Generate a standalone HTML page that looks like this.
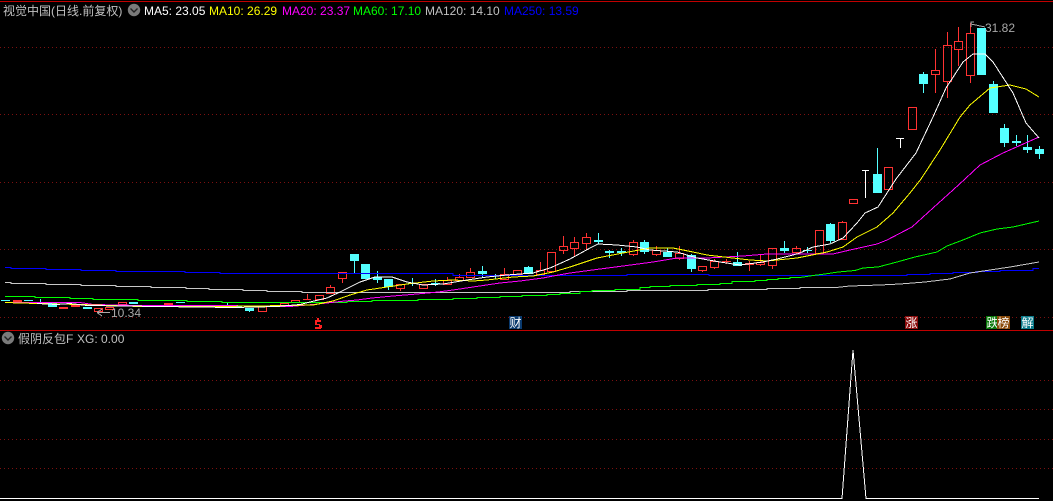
<!DOCTYPE html>
<html><head><meta charset="utf-8"><style>
html,body{margin:0;padding:0;background:#000;width:1053px;height:501px;overflow:hidden}
svg{position:absolute;left:0;top:0}
.t{position:absolute;font:12px/14px "Liberation Sans","WenQuanYi Zen Hei","Noto Sans CJK SC",sans-serif;white-space:pre;color:#c0c0c0}
.m{position:absolute;width:13px;height:13px;font:12px/13px "WenQuanYi Zen Hei","Noto Sans CJK SC",sans-serif;color:#fff;text-align:center;top:316px}
</style></head><body>
<svg width="1053" height="501" viewBox="0 0 1053 501" shape-rendering="crispEdges" fill="none">
<path d="M0 1.5H1053M0 330.5H1053" stroke="#c00000"/>
<path d="M0 47.5H1053M0 114.5H1053M0 182.5H1053M0 249.5H1053M0 317.5H1053M0 380.5H1053M0 409.5H1053M0 439.5H1053M0 468.5H1053" stroke="#7c1010" stroke-dasharray="1 3"/>
<!-- cyan candles -->
<path fill="#54ffff" d="M1035 149h9v5h-9zM1023 147h9v3h-9zM1012 141h9v2h-9zM1000 128h9v15h-9zM989 84h9v29h-9zM977 28h9v47h-9zM919 74h9v10h-9zM873 174h9v19h-9zM826 224h9v17h-9zM803 250h9v1h-9zM780 248h9v3h-9zM733 262h9v4h-9zM687 255h9v14h-9zM663 252h9v5h-9zM640 242h9v10h-9zM617 251h9v2h-9zM605 251h9v2h-9zM594 240h9v2h-9zM524 267h9v7h-9zM478 271h9v3h-9zM431 283h9v1h-9zM408 283h9v1h-9zM384 279h9v8h-9zM373 277h9v3h-9zM361 264h9v15h-9zM350 254h9v7h-9zM245 308h9v3h-9zM233 306h9v2h-9zM188 306h9v1h-9zM176 302h9v1h-9zM129 302h9v2h-9zM83 307h9v2h-9zM48 303h9v4h-9zM24 300h9v1h-9zM1 300h9v1h-9z"/>
<path stroke="#54ffff" d="M1039.5 146V159M1027.5 135V153M1016.5 135V146M1004.5 124V147M993.5 81V84M923.5 72V93M877.5 148V174M830.5 223V243M807.5 247V253M784.5 241V253M737.5 252V266M691.5 254V272M667.5 248V252M644.5 240V254M621.5 248V256M609.5 250V258M598.5 233V244M528.5 266V267M495.5 274V279M482.5 266V277M435.5 279V286M412.5 278V286M388.5 287V290M377.5 271V283M354.5 261V273M227.5 303V306M249.5 311V312M40.5 299V304"/>
<!-- red candles -->
<path fill="#ff3232" d="M13 300h9v2h-9zM59 307h9v2h-9zM71 305h9v2h-9zM164 303h9v3h-9zM198 306h9v1h-9zM722 261h9v1h-9z"/>
<path stroke="#ff3232" d="M966.5 33.5h8v42h-8zM970.5 23V33M970.5 76V83M954.5 41.5h8v8h-8zM958.5 27V41M958.5 50V66M943.5 45.5h8v36h-8zM947.5 32V45M947.5 82V98M931.5 70.5h8v4h-8zM935.5 49V70M935.5 75V93M908.5 107.5h8v22h-8zM884.5 167.5h8v22h-8zM849.5 199.5h8v4h-8zM838.5 222.5h8v17h-8zM842.5 221V222M815.5 230.5h8v23h-8zM792.5 248.5h8v4h-8zM796.5 246V248M796.5 253V254M768.5 248.5h8v17h-8zM772.5 266V269M756.5 262.5h8v2h-8zM760.5 254V262M760.5 265V266M745.5 263.5h8v1h-8zM749.5 261V263M749.5 265V271M726.5 259V264M710.5 261.5h8v6h-8zM714.5 259V261M714.5 268V269M698.5 266.5h8v4h-8zM702.5 271V272M675.5 253.5h8v5h-8zM679.5 246V253M679.5 259V260M652.5 250.5h8v4h-8zM656.5 246V250M656.5 255V256M629.5 242.5h8v12h-8zM633.5 240V242M633.5 255V256M582.5 237.5h8v6h-8zM586.5 233V237M586.5 244V250M570.5 242.5h8v6h-8zM574.5 237V242M574.5 249V257M559.5 246.5h8v4h-8zM563.5 236V246M563.5 251V254M547.5 252.5h8v19h-8zM536.5 270.5h8v4h-8zM540.5 262V270M513.5 270.5h8v4h-8zM500.5 274.5h8v5h-8zM504.5 268V274M466.5 272.5h8v5h-8zM470.5 268V272M455.5 277.5h8v3h-8zM459.5 274V277M443.5 280.5h8v4h-8zM447.5 277V280M419.5 284.5h8v4h-8zM396.5 284.5h8v4h-8zM400.5 289V291M338.5 272.5h8v6h-8zM342.5 279V283M326.5 287.5h8v6h-8zM330.5 285V287M315.5 295.5h8v4h-8zM303 299.5h8M307.5 294V299M291.5 300.5h8v2h-8zM280.5 303.5h8v2h-8zM258.5 306.5h8v5h-8zM118.5 302.5h8v2h-8zM105.5 307.5h8v2h-8zM94.5 308.5h8v3h-8z"/>
<!-- MA lines -->
<g stroke-width="1">
<path stroke="#0000ff" d="M5 267.5H11V268.5H46V269.5H81V270.5H116V271.5H185V272.5H220V273.5H453V275.5H627V274.5H709V275.5H907V274.5H930V273.5H953V272.5H977V271.5H1000V270.5H1033V268.5H1039"/>
<path stroke="#c8c8c8" d="M5 282.5H11V283.5H46V284.5H81V285.5H116V286.5H151V287.5H186V288.5H209V289.5H243V290.5H267V291.5H302V292.5H570V291.5H627V290.5H708V289.5H767V288.5H800V287.5H836L850 286 880 285 900 284 925 282 950 279 970 273 990 270 1010 267 1039 262"/>
<path stroke="#00ff00" d="M5 296.5H35V297.5H70V298.5H93V299.5H138V300.5H187V301.5H222V302.5H347V301.5H372V300.5H418V299.5H453V298.5H477V297.5H500V296.5H522V295.5H547V294.5H560V293.5H580V291.5H592V290.5H615V289.5H640V287.5H650V286.5H670V285.5H697V284.5H720V283.5H732V281.5H755V280.5H767V279.5H778V278.5H790V277.5H800L813 275.5 825 274 838 272 855 270.5 863 268 878 267 897 262 915 257 937 252 947 246 963 240 980 233 997 229 1013 227 1039 221"/>
<path stroke="#ff00ff" d="M5 302.5 80 302.5 93 304.5 140 305.5 220 305.5 290 306.5 313 304.5 327 303 345 301 357 300 372 298 393 296 417 294 428 293 438 292 453 290 473 287 500 283 520 281 543 278 553 276 570 273 600 269 623 266 653 262 677 258 707 258 743 256 767 254 820 254 833 254 850 250 877 244 887 240 912 227 933 208 953 190 965 179 980 165 1003 153 1039 137"/>
<path stroke="#ffff00" d="M5 302.5 37 303.5 80 304.5 140 306.5 220 306.5 287 305.5 313 305 333 301 350 295 367 290 387 287 407 284 433 281 453 280 473 281 487 280 513 277 533 276 553 272 570 267 597 258 623 253 650 248 673 248 693 252 707 255 750 260 767 261 797 258 827 252 843 247 857 237 877 227 893 213 910 193 921 179 940 150 960 117 970 105 990 88 1010 85 1026 89 1039 97"/>
<path stroke="#ffffff" d="M37 303.5 57 304.5 70 303.5 87 305.5 233 307.5 277 306.5 300 304.5 310 302 327 298 340 292 360 282 375 277 392 277 407 282 423 285 443 284 467 280 487 277 507 275 533 273 550 268 570 259 590 248 598 244 617 245 637 247 650 250 677 252 697 258 720 262 740 265 763 262 777 259 793 255 800 253 813 247 830 244 843 238 857 223 865 213 878 207 896 179 916 153 933 117 946 88 963 62 973 54 985 54 993 62 1013 93 1026 123 1039 138"/>
</g>
<path stroke="#ffffff" d="M862 170.5H869M865.5 171V198M896 138.5H904M900.5 139V148"/>
<!-- XG -->
<path stroke="#ffffff" d="M0 498.5H842L853 350 866 498.5H1039"/>
<path stroke="#a8a8a8" d="M971 27V22H974M971 24L985 27M97 312.5H110M97 312.5L102 309M97 312.5L102 316"/>
<!-- $ marker -->
<path fill="#ff2020" d="M317 318h2v2h-2zM315 320h6v2h-6zM315 322h2v3h-2zM317 324h3v1h-3zM319 325h3v3h-3zM315 327h6v2h-6z"/>
<!-- icons -->
<circle cx="134" cy="10" r="6.2" fill="#7a7a7a" shape-rendering="auto"/>
<path d="M130.5 8.5L134 12 137.5 8.5" stroke="#222" stroke-width="1.4" shape-rendering="auto"/>
<circle cx="8" cy="338" r="6.2" fill="#7a7a7a" shape-rendering="auto"/>
<path d="M4.5 336.5L8 340 11.5 336.5" stroke="#222" stroke-width="1.4" shape-rendering="auto"/>
</svg>
<div class="t" style="left:3px;top:4px">视觉中国(日线.前复权)</div>
<div class="t" style="left:144px;top:4px;color:#fff">MA5: 23.05</div>
<div class="t" style="left:209px;top:4px;color:#ff0">MA10: 26.29</div>
<div class="t" style="left:282px;top:4px;color:#f0f">MA20: 23.37</div>
<div class="t" style="left:353px;top:4px;color:#0f0">MA60: 17.10</div>
<div class="t" style="left:425px;top:4px;color:#c0c0c0">MA120: 14.10</div>
<div class="t" style="left:504px;top:4px;color:#0000ff">MA250: 13.59</div>
<div class="t" style="left:985px;top:21px;color:#a8a8a8">31.82</div>
<div class="t" style="left:111px;top:306px;color:#a8a8a8">10.34</div>
<div class="t" style="left:18px;top:332px">假阴反包F</div>
<div class="t" style="left:77px;top:332px">XG: 0.00</div>
<div class="m" style="left:509px;background:#0a3a6e">财</div>
<div class="m" style="left:905px;background:#8a0c0c">涨</div>
<div class="m" style="left:986px;background:#0a780a">跌</div>
<div class="m" style="left:997px;background:#8a4a0a">榜</div>
<div class="m" style="left:1021px;background:#0a7a8a">解</div>
</body></html>
